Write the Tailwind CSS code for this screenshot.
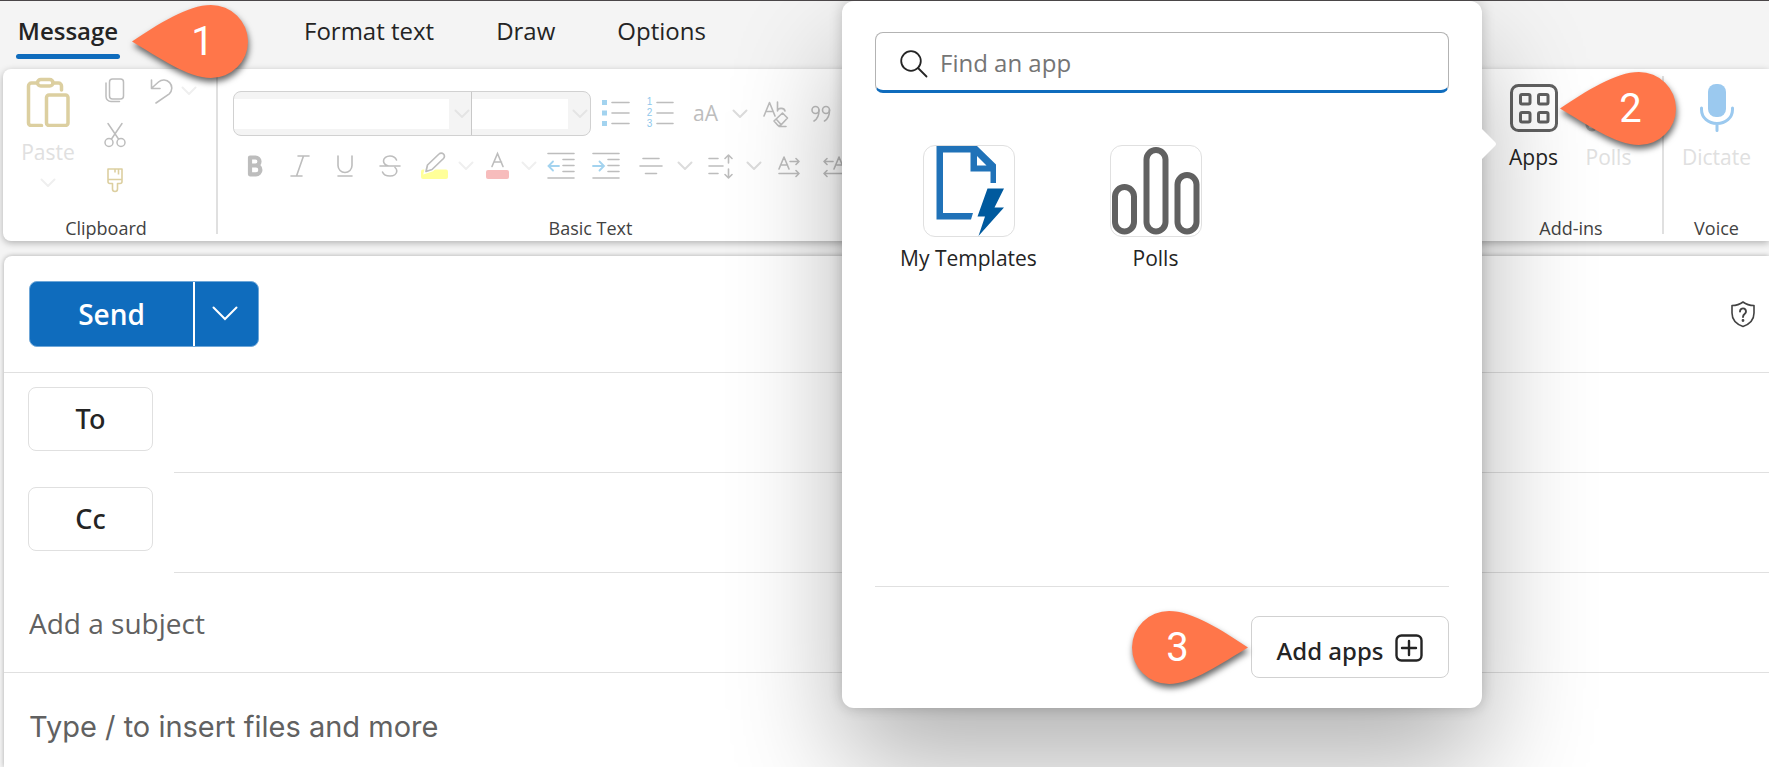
<!DOCTYPE html>
<html lang="en">
<head>
<meta charset="utf-8">
<title>New message</title>
<script src="https://cdn.jsdelivr.net/npm/@tailwindcss/browser@4"></script>
</head>
<body class="relative flex min-h-screen flex-col overflow-hidden border-t border-[#4a4648] bg-[#f4f4f4] font-['Open_Sans','Noto_Sans',sans-serif] text-[#242424]">

<svg class="hidden" aria-hidden="true">
  <symbol id="chev" viewBox="0 0 16 10"><path d="M1.500 1.500 8 8l6.500-6.500" fill="none" stroke="currentColor" stroke-width="2" stroke-linecap="round" stroke-linejoin="round"/></symbol>
</svg>

<nav class="flex h-[68px] items-start pt-3 text-2xl leading-9" aria-label="Ribbon tabs">
  <button class="ml-4 flex w-[104px] flex-col items-center font-semibold"><span>Message</span><span class="mt-[5px] h-[5px] w-full rounded-full bg-[#0f6cbd]"></span></button>
  <button class="ml-[184px]">Format text</button>
  <button class="ml-[62px]">Draw</button>
  <button class="ml-[62px]">Options</button>
</nav>

<section class="ml-[3px] flex h-[172px] shrink-0 rounded-l-lg bg-white text-[#bdbdbd] shadow-[0_2px_7px_rgba(0,0,0,0.28)]" aria-label="Ribbon">
  <div class="flex w-[206px] flex-col">
    <div class="flex grow">
      <button class="flex w-[90px] flex-col items-center pt-2 text-[#e0e0e0]">
        <svg class="h-[50px] w-11" viewBox="0 0 44 50" fill="none" stroke="#dccfa0" stroke-width="3.500" stroke-linecap="round" stroke-linejoin="round"><path d="M11 6H5.500a3 3 0 0 0-3 3v37a2.500 2.500 0 0 0 2.500 2.500h10.500M27 6h5.500a3 3 0 0 1 3 3v4"/><rect x="11.500" y="2.500" width="15.500" height="6.500" rx="3.250"/><rect x="20.500" y="18" width="21.500" height="30.500" rx="2.500"/></svg>
        <span class="mt-[11px] text-[21px] leading-7">Paste</span>
        <svg class="mt-3 h-2.5 w-4 text-[#efefef]"><use href="#chev"/></svg>
      </button>
      <div class="flex w-[44px] flex-col items-center gap-[19px] pt-2">
        <button aria-label="Copy"><svg class="h-[26px] w-[22px]" viewBox="0 0 22 26" fill="none" stroke="currentColor" stroke-width="1.500" stroke-linecap="round"><rect x="5.500" y="2" width="14" height="20" rx="3"/><path d="M2 6v13.500a5 5 0 0 0 5 5h8.500"/></svg></button>
        <button aria-label="Cut"><svg class="h-[26px] w-[22px]" viewBox="0 0 22 26" fill="none" stroke="currentColor" stroke-width="1.500" stroke-linecap="round"><path d="M4 1.500 14.500 17M18 1.500 7.500 17"/><circle cx="5" cy="20.500" r="4"/><circle cx="17" cy="20.500" r="4"/></svg></button>
        <button aria-label="Format painter"><svg class="h-[26px] w-[22px]" viewBox="0 0 22 26" fill="none" stroke="#dccfa0" stroke-width="1.600" stroke-linejoin="round"><path d="M4 2h14v12.500a2 2 0 0 1-2 2h-2.500v5.500a2.500 2.500 0 0 1-5 0v-5.500H6a2 2 0 0 1-2-2zM4 12.500h14M11 2v3.500M14.500 2v5.500"/></svg></button>
      </div>
      <div class="flex h-11 items-center gap-2 pl-3">
        <button aria-label="Undo"><svg class="h-[26px] w-6" viewBox="0 0 24 26" fill="none" stroke="currentColor" stroke-width="1.600" stroke-linecap="round" stroke-linejoin="round"><path d="M2.500 2v8.500H11M2.800 10 9.500 4a8 8 0 0 1 10.800 11.800L7 25"/></svg></button>
        <button aria-label="Undo options"><svg class="h-2.5 w-4 text-[#efefef]"><use href="#chev"/></svg></button>
      </div>
    </div>
    <span class="pb-px text-center text-lg leading-6 text-[#424242]">Clipboard</span>
  </div>
  <div class="my-[7px] ml-[7px] w-0.5 bg-[#e0e0e0]"></div>

  <div class="flex w-[744px] flex-col pl-[15px]">
    <div class="mt-[22px] flex h-[45px] items-center">
      <div class="mr-0.5 flex h-full w-[358px] items-center overflow-hidden rounded-lg border border-[#d1d1d1] bg-[#f4f4f4]">
        <input class="h-[30px] w-[215px] bg-white" aria-label="Font" disabled>
        <button class="flex h-full w-[23px] items-center justify-end border-r border-[#c8c8c8] pr-px" aria-label="Font list"><svg class="h-2.5 w-4 text-[#e4e4e4]"><use href="#chev"/></svg></button>
        <input class="h-[30px] w-24 bg-white" aria-label="Font size" disabled>
        <button class="flex h-full grow items-center justify-end pr-0.5" aria-label="Font size list"><svg class="h-2.5 w-4 text-[#e4e4e4]"><use href="#chev"/></svg></button>
      </div>
      <button class="flex w-[45px] justify-center pb-0.5" aria-label="Bullets"><svg class="h-7 w-7" viewBox="0 0 28 28"><path d="M0 1h5v5H0zM0 11.500h5v5H0zM0 22h5v5H0z" fill="#a3d3ef"/><path d="M10 3.500h17M10 14h17M10 24.500h17" stroke="currentColor" stroke-width="1.600" stroke-linecap="round"/></svg></button>
      <button class="flex w-[45px] items-center justify-center gap-1 pb-0.5" aria-label="Numbering"><span class="flex flex-col font-['Liberation_Sans',sans-serif] text-[10px] leading-[11px] text-[#8fc8ec]"><span>1</span><span>2</span><span>3</span></span><svg class="h-7 w-[18px]" viewBox="0 0 18 28"><path d="M1 3.500h16M1 14h16M1 24.500h16" stroke="currentColor" stroke-width="1.600" stroke-linecap="round"/></svg></button>
      <button class="w-[45px] pb-0.5 text-[21px] leading-7" aria-label="Change case">aA</button>
      <button class="flex w-6 justify-center" aria-label="Case options"><svg class="h-2.5 w-4 text-[#dcdcdc]"><use href="#chev"/></svg></button>
      <button class="flex w-12 justify-center" aria-label="Clear formatting"><svg class="h-7 w-7" viewBox="0 0 28 28" fill="none" stroke="currentColor" stroke-width="1.600" stroke-linecap="round" stroke-linejoin="round"><path d="M2 16 7.500 2.500 13 16M4 11.500h7M15.500 2v9c0-3 6.500-4 7.500 0M20.500 13l5 5-7 7.500h-2.500l-4-4.500zM14.500 19.500l4.500 5M17 26.500h7"/></svg></button>
      <button class="flex w-[42px] justify-center" aria-label="Quote"><svg class="h-5 w-5" viewBox="0 0 20 20" fill="none" stroke="currentColor" stroke-width="1.600" stroke-linecap="round"><circle cx="4.500" cy="6" r="3.500"/><path d="M8 6c0 5-1.500 9-5 11"/><circle cx="15" cy="6" r="3.500"/><path d="M18.500 6c0 5-1.500 9-5 11"/></svg></button>
    </div>
    <div class="mt-[7px] -ml-px flex h-[45px] items-center">
      <button class="flex w-[45px] justify-center" aria-label="Bold"><svg class="h-6 w-5" viewBox="0 0 20 24" fill="none" stroke="currentColor" stroke-width="4.200" stroke-linejoin="round"><path d="M5 3.500h5.500a4 4 0 0 1 0 8H5zM5 11.500h6a4.400 4.400 0 0 1 0 8.800H5z"/></svg></button>
      <button class="flex w-[45px] justify-center" aria-label="Italic"><svg class="h-6 w-5" viewBox="0 0 20 24" fill="none" stroke="currentColor" stroke-width="1.600" stroke-linecap="round"><path d="M8 2h11M1 22h11M13.500 2 6.500 22"/></svg></button>
      <button class="flex w-[45px] justify-center" aria-label="Underline"><svg class="h-6 w-5" viewBox="0 0 20 24" fill="none" stroke="currentColor" stroke-width="1.600" stroke-linecap="round"><path d="M3 2v9.500a7 7 0 0 0 14 0V2M3 22h14"/></svg></button>
      <button class="flex w-[45px] justify-center" aria-label="Strikethrough"><svg class="h-6 w-[22px]" viewBox="0 0 22 24" fill="none" stroke="currentColor" stroke-width="1.600" stroke-linecap="round"><path d="M17.500 6C16.500 3.500 14 2 11 2 7.500 2 4.500 4 4.500 7c0 2.500 2 4 5 5M1 12h20M16 13.500c1.200 1 1.800 2 1.800 3.500 0 3-3 5-6.800 5-3.500 0-6.500-1.500-7.500-4"/></svg></button>
      <button class="flex w-[45px] justify-center" aria-label="Highlight"><svg class="h-[30px] w-7" viewBox="0 0 28 30"><rect x="0" y="18.500" width="27" height="9.500" rx="2" fill="#ffff99"/><path d="M5 20.500 6.500 14 18 3a3 3 0 0 1 4.500 4.500L11 18.500z" fill="#fff" stroke="#fff" stroke-width="4"/><path d="M5 20.500 6.500 14 18 3a3 3 0 0 1 4.500 4.500L11 18.500z" fill="#fff" stroke="currentColor" stroke-width="1.700" stroke-linejoin="round"/></svg></button>
      <button class="flex w-[18px] justify-center" aria-label="Highlight colors"><svg class="h-2.5 w-4 text-[#efefef]"><use href="#chev"/></svg></button>
      <button class="flex w-[45px] justify-center" aria-label="Font color"><svg class="h-[30px] w-6" viewBox="0 0 24 30"><rect x="0" y="19" width="23" height="9" rx="2" fill="#f7bcbc"/><path d="M6 15.500 11.500 2.500 17 15.500M8 11h7.500" fill="none" stroke="currentColor" stroke-width="1.600" stroke-linecap="round"/></svg></button>
      <button class="flex w-[18px] justify-center" aria-label="Font colors"><svg class="h-2.5 w-4 text-[#efefef]"><use href="#chev"/></svg></button>
      <button class="flex w-[45px] justify-center" aria-label="Decrease indent"><svg class="h-7 w-7" viewBox="0 0 28 28" fill="none" stroke="currentColor" stroke-width="1.600" stroke-linecap="round"><path d="M1 1.500h26M16 7.500h11M16 13.500h11M16 19.500h11M1 26h26"/><path d="M12 14H1.500M6 9.500 1.500 14 6 18.500" stroke="#a3d3ef" stroke-width="1.800"/></svg></button>
      <button class="flex w-[45px] justify-center" aria-label="Increase indent"><svg class="h-7 w-7" viewBox="0 0 28 28" fill="none" stroke="currentColor" stroke-width="1.600" stroke-linecap="round"><path d="M1 1.500h26M16 7.500h11M16 13.500h11M16 19.500h11M1 26h26"/><path d="M1 14h11M7.500 9.500 12 14l-4.500 4.500" stroke="#a3d3ef" stroke-width="1.800"/></svg></button>
      <button class="flex w-[45px] justify-center" aria-label="Align"><svg class="h-7 w-6" viewBox="0 0 24 28" stroke="currentColor" stroke-width="1.600" stroke-linecap="round"><path d="M4 6.500h16M1 14h22M6.500 21.500h11"/></svg></button>
      <button class="flex w-6 justify-center" aria-label="Align options"><svg class="h-2.5 w-4 text-[#dcdcdc]"><use href="#chev"/></svg></button>
      <button class="flex w-[45px] justify-center" aria-label="Line spacing"><svg class="h-7 w-[26px]" viewBox="0 0 26 28" fill="none" stroke="currentColor" stroke-width="1.600" stroke-linecap="round" stroke-linejoin="round"><path d="M2 6.500h9M2 14h14M2 21.500h9M21.500 11V3.500M18 6.500l3.500-3.500L25 6.500M21.500 17v8M18 22.500l3.500 3.500 3.500-3.500"/></svg></button>
      <button class="flex w-6 justify-center" aria-label="Spacing options"><svg class="h-2.5 w-4 text-[#dcdcdc]"><use href="#chev"/></svg></button>
      <button class="flex w-[45px] justify-center" aria-label="Left to right"><svg class="h-7 w-[22px]" viewBox="0 0 22 28" fill="none" stroke="currentColor" stroke-width="1.600" stroke-linecap="round" stroke-linejoin="round"><path d="M1 17 6 5l5 12M2.500 13h7M12 9.500h9M18 6.500l3 3-3 3M1 21.500h20M18 18.500l3 3-3 3"/></svg></button>
      <button class="flex w-[45px] justify-center" aria-label="Right to left"><svg class="h-7 w-[22px]" viewBox="0 0 22 28" fill="none" stroke="currentColor" stroke-width="1.600" stroke-linecap="round" stroke-linejoin="round"><path d="M11 17l5-12 5 12M12.500 13h7M10 9.500H1M4 6.500l-3 3 3 3M21 21.500H1M4 18.500l-3 3 3 3"/></svg></button>
    </div>
    <span class="mt-auto pb-px pr-3.5 text-center text-lg leading-6 text-[#424242]">Basic Text</span>
  </div>

  <div class="ml-auto flex w-[182px] flex-col">
    <div class="flex grow justify-center pt-[15px] text-[21px] leading-7">
      <button class="flex w-[75px] flex-col items-center text-[#242424]">
        <svg class="h-12 w-12" viewBox="0 0 48 48" fill="none" stroke="#616161" stroke-width="3"><rect x="1.500" y="1.500" width="45" height="45" rx="7"/><rect x="10.500" y="10.500" width="9.500" height="9.500" rx="1.500"/><rect x="28.500" y="10.500" width="9.500" height="9.500" rx="1.500"/><rect x="10.500" y="28.500" width="9.500" height="9.500" rx="1.500"/><rect x="28.500" y="28.500" width="9.500" height="9.500" rx="1.500"/></svg>
        <span class="mt-[11px]">Apps</span>
      </button>
      <button class="flex w-[75px] flex-col items-center text-[#e0e0e0]">
        <svg class="h-12 w-12" viewBox="0 0 48 48" fill="none" stroke="#c0c0c0" stroke-width="3"><rect x="2" y="21" width="10" height="25" rx="5"/><rect x="18" y="2" width="10" height="44" rx="5"/><rect x="34" y="14" width="10" height="32" rx="5"/></svg>
        <span class="mt-[11px]">Polls</span>
      </button>
    </div>
    <span class="pb-px text-center text-lg leading-6 text-[#424242]">Add-ins</span>
  </div>
  <div class="my-[7px] w-0.5 bg-[#e0e0e0]"></div>
  <div class="flex w-[105px] flex-col">
    <button class="flex grow flex-col items-center pt-[15px] text-[21px] leading-7 text-[#e0e0e0]">
      <svg class="h-12 w-9" viewBox="0 0 36 48"><rect x="9" y="0" width="18" height="33" rx="8" fill="#9bc9ef"/><path d="M2.500 24v1.500C2.500 34 9.500 39.500 18 39.500S33.500 34 33.500 25.500V24M18 40v6.500" fill="none" stroke="#9bc9ef" stroke-width="3" stroke-linecap="round"/></svg>
      <span class="mt-[11px]">Dictate</span>
    </button>
    <span class="pb-px text-center text-lg leading-6 text-[#424242]">Voice</span>
  </div>
</section>

<main class="ml-1 mt-[15px] flex grow flex-col rounded-tl-lg bg-white shadow-[0_0_5px_rgba(0,0,0,0.3)]">
  <div class="flex h-[117px] items-center border-b border-[#e0e0e0] pb-px pl-[25px] pr-3">
    <div class="flex h-[66px] overflow-hidden rounded-lg border border-[#6fa7d8] bg-[#0f6cbd] text-white">
      <button class="w-[163px] text-[28px] font-semibold">Send</button>
      <button class="flex w-[65px] items-center justify-center border-l-2 border-white pr-1" aria-label="Send options"><svg class="h-4 w-[26px]" viewBox="0 0 26 16" fill="none" stroke="currentColor" stroke-width="2" stroke-linecap="round"><path d="M1.500 1.500 13 13 24.500 1.500"/></svg></button>
    </div>
    <button class="ml-auto" aria-label="Sensitivity"><svg class="h-7 w-7" viewBox="0 0 28 28" fill="none" stroke="#424242" stroke-width="1.600" stroke-linecap="round" stroke-linejoin="round"><path d="M14 2c3 2.300 7 3.500 11 3.500V13c0 6.500-4 11-11 13.500C7 24 3 19.500 3 13V5.500C7 5.500 11 4.300 14 2z"/><path d="M11 11.500a3 3 0 1 1 4.800 2.300C14.500 14.800 14 15.500 14 17" stroke-width="1.900"/><circle cx="14" cy="20.500" r=".6" fill="#424242"/></svg></button>
  </div>
  <div class="flex h-[100px] items-start pl-6">
    <button class="mt-3.5 h-16 w-[125px] rounded-lg border border-[#e0e0e0] font-['Noto_Sans',sans-serif] text-[27px] font-medium">To</button>
    <input class="ml-[21px] h-full min-w-0 grow border-b border-[#e0e0e0] text-[28px] outline-none" aria-label="To">
  </div>
  <div class="flex h-[100px] items-start pl-6">
    <button class="mt-3.5 h-16 w-[125px] rounded-lg border border-[#e0e0e0] font-['Noto_Sans',sans-serif] text-[27px] font-medium">Cc</button>
    <input class="ml-[21px] h-full min-w-0 grow border-b border-[#e0e0e0] text-[28px] outline-none" aria-label="Cc">
  </div>
  <input class="h-[100px] w-full border-b border-[#e0e0e0] px-[25px] text-[28px] outline-none placeholder:text-[#616161]" placeholder="Add a subject" aria-label="Subject">
  <textarea class="h-[94px] w-full grow resize-none px-[25px] pt-8 font-[Inter,'Liberation_Sans',sans-serif] text-[29px] leading-11 outline-none placeholder:text-[#616161]" placeholder="Type / to insert files and more" aria-label="Message body"></textarea>
</main>

<section class="absolute left-[842px] top-0 flex h-[707px] w-[640px] flex-col rounded-xl bg-white px-[33px] pb-[30px] pt-[31px] shadow-[0_0_14px_rgba(0,0,0,0.2),0_56px_112px_rgba(0,0,0,0.3)]" role="dialog" aria-label="Apps">
  <svg class="absolute left-full top-32 h-[30px] w-[15px]" viewBox="0 0 15 30"><path d="M0 0 13 13q2 2 0 4L0 30z" fill="#fff"/></svg>
  <label class="flex h-[61px] shrink-0 items-center gap-3 rounded-lg border border-b-3 border-[#b3b3b3] border-b-[#0f6cbd] pl-6">
    <svg class="mt-1 h-7 w-7 shrink-0" viewBox="0 0 28 28" fill="none" stroke="#242424" stroke-width="1.800" stroke-linecap="round"><circle cx="11" cy="11" r="9.800"/><path d="m18 18 8.500 8.500"/></svg>
    <input class="min-w-0 grow pt-0.5 text-2xl outline-none placeholder:text-[#757575]" placeholder="Find an app" aria-label="Find an app">
  </label>
  <div class="mt-[52px] flex text-[21px] leading-7">
    <button class="flex w-[187px] flex-col items-center">
      <svg class="h-[92px] w-[92px] rounded-xl border border-[#e0e0e0]" viewBox="0 0 90 90"><path d="M12.500 0H53L72 18.500V37H66.500V25.500H46.500V6.500H19V67H49L47 73.500H12.500z" fill="#2072b8"/><path d="M53 10v9.500h9.500z" fill="#fff"/><path d="M63.500 42.500H80L70.500 61.500H80L54.500 90 61 70.500H53.500z" fill="#005a9e"/></svg>
      <span class="mt-[7px]">My Templates</span>
    </button>
    <button class="flex w-[187px] flex-col items-center">
      <svg class="h-[92px] w-[92px] rounded-xl border border-[#e0e0e0]" viewBox="0 0 90 90" fill="none" stroke="#616161" stroke-width="6"><rect x="4" y="41" width="19" height="44.500" rx="9.500"/><rect x="35.500" y="4" width="19" height="81.500" rx="9.500"/><rect x="66.500" y="29" width="19" height="56.500" rx="9.500"/></svg>
      <span class="mt-[7px]">Polls</span>
    </button>
  </div>
  <div class="mt-auto flex justify-end border-t border-[#e0e0e0] pt-[29px]">
    <button class="flex h-[62px] w-[198px] items-center justify-center gap-3 rounded-lg border border-[#d1d1d1] text-2xl font-medium">
      <span class="pt-2 font-['Noto_Sans',sans-serif]">Add apps</span>
      <svg class="mt-px h-7 w-7" viewBox="0 0 28 28" fill="none" stroke="#242424" stroke-width="2.400" stroke-linecap="round"><rect x="1.500" y="1.500" width="25" height="25" rx="5"/><path d="M14 7v14M7 14h14"/></svg>
    </button>
  </div>
</section>

<div class="absolute left-[132px] top-[3px] flex h-[75px] w-[117px] items-center justify-center pl-6 text-[40px] text-white">
  <svg class="absolute inset-0 h-full w-full overflow-visible drop-shadow-[1px_4px_3px_rgba(0,0,0,0.6)]" viewBox="0 0 117 75"><path d="M0 37.500C26 20 56 1 79 1a37 36.500 0 0 1 0 73C56 74 26 53 0 37.500z" fill="#ff764a"/></svg>
  <span class="relative font-[Roboto,sans-serif]">1</span>
</div>
<div class="absolute left-[1560px] top-[70px] flex h-[75px] w-[117px] items-center justify-center pl-6 text-[40px] text-white">
  <svg class="absolute inset-0 h-full w-full overflow-visible drop-shadow-[1px_4px_3px_rgba(0,0,0,0.6)]" viewBox="0 0 117 75"><path d="M0 37.500C26 20 56 1 79 1a37 36.500 0 0 1 0 73C56 74 26 53 0 37.500z" fill="#ff764a"/></svg>
  <span class="relative font-[Roboto,sans-serif]">2</span>
</div>
<div class="absolute left-[1131px] top-[609px] flex h-[75px] w-[117px] items-center justify-center pr-6 text-[40px] text-white">
  <svg class="absolute inset-0 h-full w-full overflow-visible drop-shadow-[1px_4px_3px_rgba(0,0,0,0.6)]" viewBox="0 0 117 75"><path d="M117 37.500C91 20 61 1 38 1a37 36.500 0 0 0 0 73C61 74 91 53 117 37.500z" fill="#ff764a"/></svg>
  <span class="relative font-[Roboto,sans-serif]">3</span>
</div>
</body>
</html>
